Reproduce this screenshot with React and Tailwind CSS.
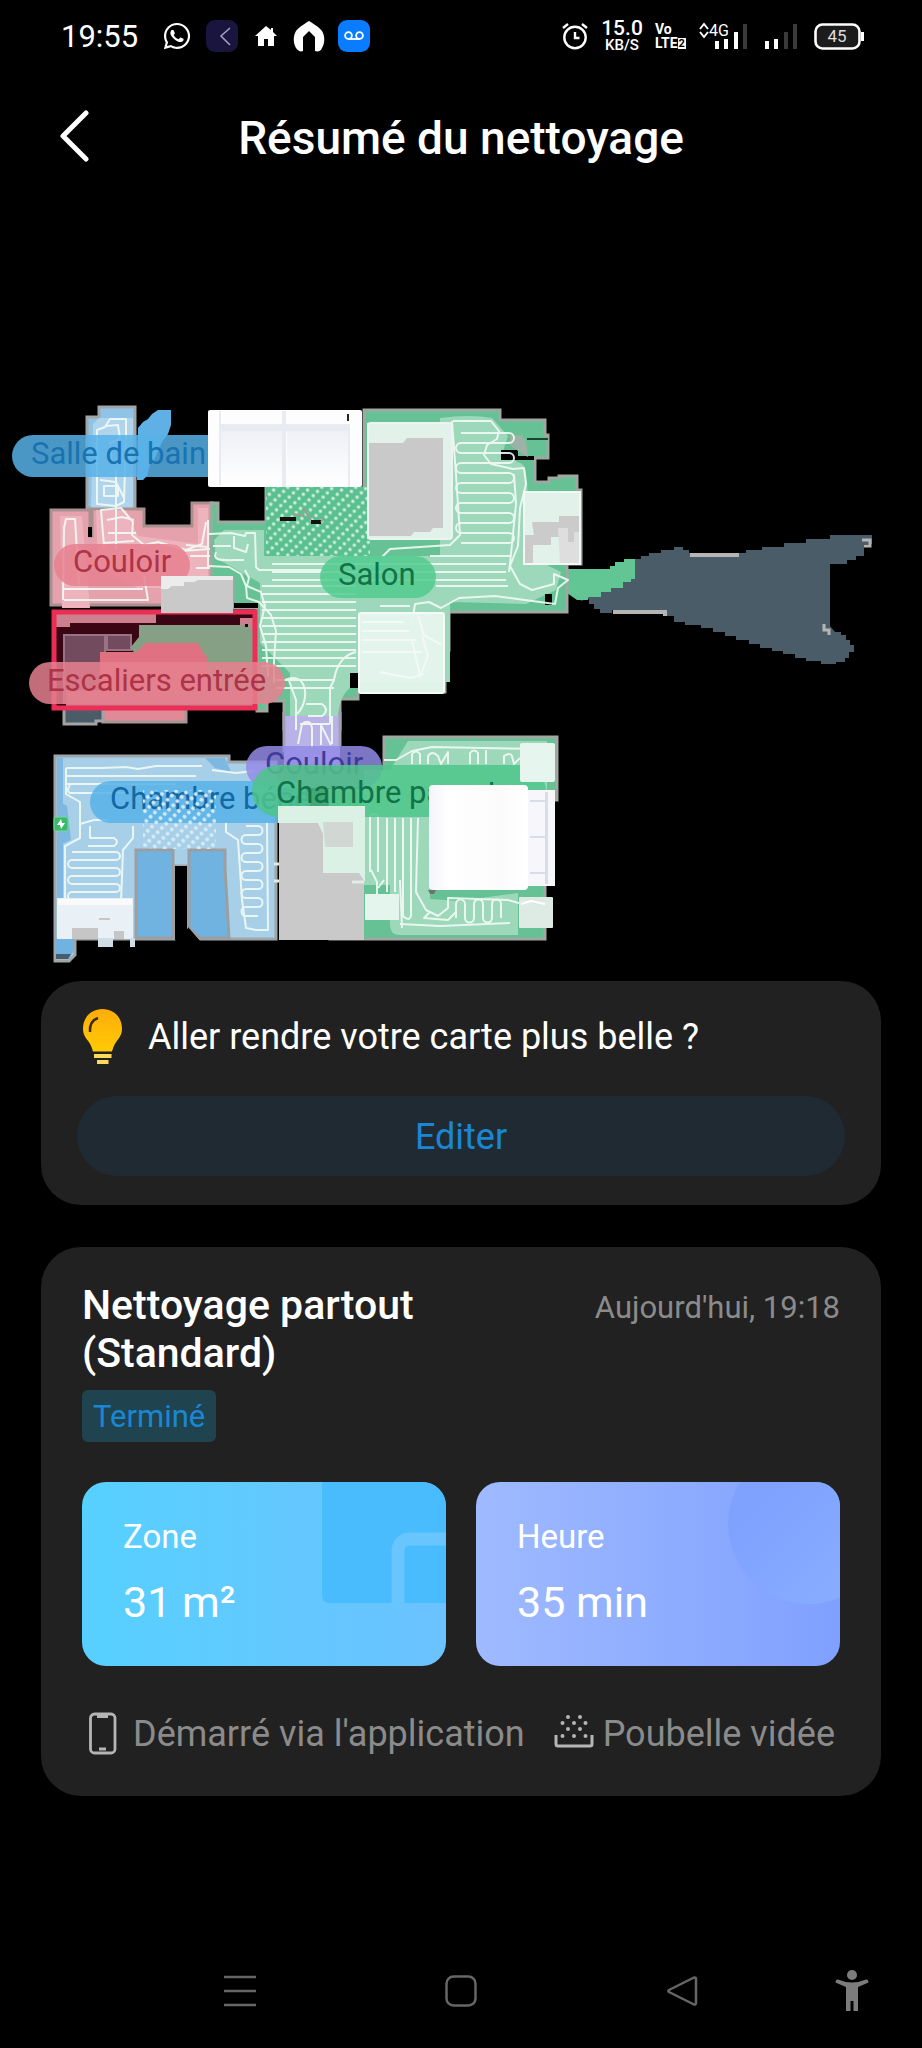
import { FaWhatsapp } from "react-icons/fa";

/* Serpentine vacuum track: horizontal lanes joined by rounded turns. */
function lanes(x0, x1, y0, y1, step) {
  let d = `M${x0} ${y0}`;
  let right = true;
  for (let y = y0; y <= y1; y += step) {
    d += ` H${right ? x1 : x0}`;
    if (y + step <= y1) d += ` a${step / 2} ${step / 2} 0 0 ${right ? 1 : 0} 0 ${step}`;
    right = !right;
  }
  return d;
}

/* The same track with vertical lanes. */
function columns(x0, x1, y0, y1, step) {
  let d = `M${x0} ${y1}`;
  let up = true;
  for (let x = x0; x <= x1; x += step) {
    d += ` V${up ? y0 : y1}`;
    if (x + step <= x1) d += ` a${step / 2} ${step / 2} 0 0 ${up ? 1 : 0} ${step} 0`;
    up = !up;
  }
  return d;
}

function straight(x0, x1, y0, y1, step) {
  let d = "";
  for (let y = y0; y <= y1; y += step) d += `M${x0} ${y}H${x1}`;
  return d;
}

function StatusBar() {
  return (
    <div className="flex h-[72px] items-center justify-between pr-[58px] pl-[61px]">
      <div className="flex items-center">
        <span className="w-[80px] text-[31px] leading-none">19:55</span>
        <FaWhatsapp className="ml-[21px] size-[30px]" />
        <svg className="ml-[14px] size-8" viewBox="0 0 32 32" fill="none">
          <rect width="32" height="32" rx="9" fill="#19153f" />
          <path d="M24 8 15 16l9 9" stroke="#a09fc0" strokeWidth="1.6" />
        </svg>
        <svg className="ml-[16px] h-6 w-6" viewBox="0 0 24 24" fill="#fff">
          <path d="M12 2 1 12h3v10h6v-7h4v7h6V12h3l-4-4V4h-2v2z" />
        </svg>
        <svg className="ml-[15px] size-8" viewBox="0 0 32 32" fill="#fff">
          <path d="M16 1C13 3 6 7 3 11c-3 5-3 12 0 17 2 3 5 4 7 3V17l6-6 6 6v14c3 1 6 0 7-3 3-5 3-12 0-17C26 7 19 3 16 1Z" />
        </svg>
        <svg className="ml-[13px] size-8" viewBox="0 0 32 32" fill="none">
          <rect width="32" height="32" rx="9" fill="#0a7cff" />
          <g stroke="#fff" strokeWidth="1.8">
            <circle cx="10.500" cy="15.500" r="3.400" />
            <circle cx="21.500" cy="15.500" r="3.400" />
            <path d="M10 19h12" />
          </g>
        </svg>
      </div>
      <div className="flex items-center">
        <svg className="size-7" viewBox="0 0 28 28" fill="none" stroke="#fff" strokeWidth="2.4">
          <circle cx="14" cy="15.5" r="10.7" />
          <path d="M14 10v6h4.5M2 6l5-4M26 6l-5-4" />
        </svg>
        <div className="ml-3 flex w-[42px] flex-col items-center font-medium">
          <span className="text-[21px] leading-[17px]">15.0</span>
          <span className="text-[15px] leading-[16px]">KB/S</span>
        </div>
        <div className="ml-[12px] flex w-[34px] flex-col text-[14px] leading-[14px] font-bold">
          <span>Vo</span>
          <span className="flex items-center">
            LTE
            <span className="bg-white px-px text-[11px] leading-[11px] text-black">2</span>
          </span>
        </div>
        <svg className="ml-[10px] h-8 w-[50px]" viewBox="0 0 50 32" fill="#fff">
          <path d="m1 9 4-5 4 5M1 12l4 5 4-5" fill="none" stroke="#fff" strokeWidth="2" />
          <text x="10" y="16" fontSize="16">4G</text>
          <path d="M16 21h4v8h-4zM25 19h4v10h-4zM35 12h4v17h-4z" />
          <path fill="#3a3a3a" d="M44 4h4v25h-4z" />
        </svg>
        <svg className="ml-[15px] h-8 w-[36px]" viewBox="0 0 36 32" fill="#fff">
          <path d="M1 21h4v8H1zM10 19h4v10h-4z" />
          <path fill="#3a3a3a" d="M20 12h4v17h-4zM29 4h4v25h-4z" />
        </svg>
        <svg className="ml-[14px] h-8 w-[50px]" viewBox="0 0 50 32">
          <rect x="1.5" y="4.5" width="44" height="24" rx="7" fill="#1c1c1c" stroke="#fff" strokeWidth="2.6" />
          <path fill="#fff" d="M47 12h3v9h-3z" />
          <text x="23" y="22" fontSize="17" textAnchor="middle" fill="#ddd">45</text>
        </svg>
      </div>
    </div>
  );
}

function RoomLabel({ x, y, width, height = 42, fill, ink, textX, baseline, children }) {
  return (
    <g>
      <rect x={x} y={y} width={width} height={height} rx={height / 2} fill={fill} fillOpacity="0.85" />
      <text x={textX} y={baseline} fontSize="31" fill={ink}>{children}</text>
    </g>
  );
}

function CleaningMap() {
  return (
    <svg className="mt-[196px] block w-full" viewBox="0 400 922 570" role="img" aria-label="Carte du nettoyage">
      <defs>
        <pattern id="rugGreen" width="6" height="8" patternUnits="userSpaceOnUse" patternTransform="rotate(-45)">
          <rect width="6" height="8" fill="#5bc08f" />
          <circle cx="3" cy="4" r="1.700" fill="#d3f0e0" />
        </pattern>
        <pattern id="rugBlue" width="6" height="8" patternUnits="userSpaceOnUse" patternTransform="rotate(-45)">
          <circle cx="3" cy="4" r="1.900" fill="#d8ecf8" />
        </pattern>
        <linearGradient id="seat" x2="0" y2="1">
          <stop stopColor="#eef0f6" />
          <stop offset="1" stopColor="#ffffff" />
        </linearGradient>
        <linearGradient id="sheet">
          <stop stopColor="#f4f4fd" />
          <stop offset="0.2" stopColor="#ffffff" />
          <stop offset="0.7" stopColor="#fbfbfb" />
          <stop offset="1" stopColor="#ffffff" />
        </linearGradient>
      </defs>

      {/* outdoor area seen by the lidar */}
      <path
        fill="#4b5c69"
        d="M580 601l54-42h7v-3h8v-3h12v-3h13v-3h9v3h6v3h57v-3h16v-3h22v-4h22v-4h24v-4h42v9h-8v12h-8v4h-9v4h-17v62l5 6h6v3h5v5h4v5h4v7h-5v6h-4v4h-9v2h-15v-3h-15v-3h-11v-4h-12v-3h-11v-3h-12v-4h-11v-4h-13v-4h-11v-4h-12v-4h-12v-3h-16v-3h-11v-6h-7v-6h-55v3h-12v-4h-6v-5h-5v-5z"
      />
      <path d="M690 555h49M613 612h52v4" fill="none" stroke="#b5b5b5" strokeWidth="4" />
      <path d="M862 540h8v6h-6M824 624v6h5v5" fill="none" stroke="#b5b5b5" strokeWidth="3" />
      <path fill="#62c594" d="M567 569h43v-3h5v-4h9v-3h11v20h-4v3h-8v6h-12v4h-10v5h-13v3h-11l-10-7z" />

      {/* bathroom */}
      <path fill="#8fc4e6" stroke="#a2a6a8" strokeWidth="3" d="M87 417h12v-10h36v101H87z" />
      <path fill="#afd4eb" d="M93 424l6-6h34v90H91z" />
      <path fill="#5fb0e4" d="M138 428l5-6 5-3 4-5 6-4h13v15l-3 9-6 8-7 16-5 6-3 12-4 4h-6z" />

      {/* hallway */}
      <path fill="#e5a2ad" stroke="#a8908f" strokeWidth="3" d="M51 510h39v26h2v-27h52v17h48v-23h20v102H51z" />
      <path fill="#edb4bd" d="M60 516h22l8 92H62zM96 510h30l12 26 60 8v-36h10v80h-70l-40-20z" />
      <path fill="#000" d="M88 527h4v10h-4z" />

      {/* living room */}
      <path
        fill="#66c294"
        stroke="#a0a8a2"
        strokeWidth="3"
        d="M211 503h7v19h48v-34h98v-78h136v10h45v15h3v23h-13v24h14v-4h10v-2h18v14h4v74h-14v48H449v38h-4v42h-87v7h-18v30h-56v-28h-17v10h-10V608h-24v-30h-22z"
      />
      <path
        fill="#9dd8bb"
        d="M214 540l10-10h40v26h176V418q30-4 52 0l16 18-6 18 20 10q8 4 5 80l18 20 16 8-5 18-30 14-76-2v80h-90q-22 8-22 38v28h-48v-75l-30-30v-60l-44-25z"
      />
      <path fill="#000" d="M501 450h17v6h16v4h-33zM545 594h7v11h-7zM350 673h8v15h-8zM234 603h24v5h-24z" />
      <path fill="#9db2a6" d="M510 435h12l4 6 2 16-10-6-8-6z" />
      <path d="M527 439h21" stroke="#174531" strokeWidth="2" />
      <path fill="#b9b2e6" d="M284 716h56v50h-56z" />
      <path fill="none" stroke="#a3a0b5" strokeWidth="3" d="M284 712v40M340 712v34" />
      <path fill="url(#rugGreen)" d="M266 487h104v69H266z" />
      <path d="M280 519h16M311 522h10" stroke="#111" strokeWidth="4" />
      <path d="M294 514l10 2M303 508l8 12M321 522l3-4" stroke="#9d9d93" strokeWidth="2" />

      {/* parents' room */}
      <path fill="#66c294" stroke="#a0a8a2" strokeWidth="3" d="M384 737h173v63h-12v139H330V790h54z" />
      <path fill="#9dd8bb" d="M408 741h139v70H430v88l30 2 58-8v42H400q-10 0-10-10v-40h-26V770h26z" />

      {/* child's room */}
      <path fill="#a7cfe8" stroke="#a0a5a8" strokeWidth="3" d="M55 756h174v6h47v177h-76l-12-12v-61h-14v73H75v16l-6 6H55z" />
      <path fill="#7cb8e0" d="M57 800l10 6 4 34-14 6zM57 758h6v180h-6zM205 758h20l6 14-16-4z" />
      <path fill="#70b3e0" stroke="#9b9fa2" strokeWidth="3" d="M136 850h37v88h-37zM189 850h36v18l4 70h-29l-11-10z" />
      <path fill="#000" d="M175 866h12v74h-12zM188 927l12 14h-12z" />
      <path fill="#70b3e0" d="M56 938h18v12l-5 9H56z" />
      <path fill="#4b5c69" d="M56 954h15l-3 5H56z" />

      {/* no-go stairs */}
      <path fill="#e08997" stroke="#a39798" strokeWidth="3" d="M103 700h83v22h-83z" />
      <path fill="#4b5c69" stroke="#a3a3a3" strokeWidth="3" d="M64 700h39v21h-7v3H64z" />
      <path fill="#2c0410" d="M52 612h205v98H52z" />
      <path fill="#c98792" d="M56 613h100v10H70v4H56zM240 618h14v20h-14z" />
      <path fill="#694f60" stroke="#8f7b88" strokeWidth="2" d="M64 635h41v68H64zM107 635h24v15h-24z" />
      <path fill="#7dab8a" d="M139 625h110l5 8v73H206l-10-40-60-12-6-6 9-11z" />
      <path fill="#de7888" d="M100 706v-54h36l10-9h52l4 8 6 8v47z" />
      <path fill="#cc8893" d="M66 690h188v18H66z" />
      <path fill="#000" d="M245 624h3v3h-3z" />
      <rect x="54" y="612" width="201" height="96" fill="#ee2b52" fillOpacity="0.08" stroke="#ec2d55" strokeWidth="5" />

      {/* vacuum track */}
      <g fill="none" stroke="#f2fbf6" strokeWidth="2" strokeLinejoin="round" opacity="0.9">
        <path d="M97 504V430l8-3 5-8h16v15l-2 68-8 4zM106 426l12-1 2 14-10 4 2 20h8M104 486h14v10h-14zM116 470v80M100 480l16 2 8 16" />
        <path d="M63 600l1-72 2-9h9l4 66M63 589h80M64 600h84l-4-24M104 546l-3-36 20-2 12 14-1 13 12 10 14-3 28 8 16-6 4-22M107 520l15-3 12 3M108 533h28M104 543l30-2M186 545l22 2M190 556h20M196 568h14M208 520v48M182 551l28-2" />
        <path d="M209 534l22-1 14 3 1-3h9l1 34 3 3h64M209 566l20 1 12 7 5 12 1 12 12 4 12 13 5 16-2 30v22M245 570l4 8-2 8 14 6 4 14-5 20 6 20 2 30M213 546h18M216 552c-4 10 6 8 28 8M234 536v12l12 4 2-8" />
        <path d={straight(262, 356, 586, 672, 8)} />
        <path d={straight(276, 334, 680, 694, 8)} />
        <path d={straight(272, 506, 564, 580, 8)} />
        <path d="M430 556h80M436 586h72M380 606h30" />
        <path d={lanes(461, 509, 433, 552, 10)} />
        <path d="M453 421h38l8 10-2 8-10 6-3 10 7 9 22 5 11-1 2 16-6 24-2 38-8 20 10 18 12 6 22-6v-10l14 6-10 8-3 16-60-8-36 2-18 10-12-6-14 2-3 20M514 474l2 30-5 50-2 18M452 421l4 54 4 60-10 10-60 4-8 8" />
        <path d="M356 652q-18 4-22 28l-4 8v36M296 730v-30l-8-22M285 680c22-10 26 20 12 34M306 704h16q8 6 0 12h-14M300 724h30M298 744l4-20q8-6 10 4v20M321 745v-20l10 20M332 716v28" />
        <path d="M66 768h36l24-1 12 2 18-3h46M66 776h130M66 784h110M66 768v26l14 8v36l-15 8v62M70 785q-4 6 0 8h60M80 824l14-4h14M212 770l24 3 18-2M133 826v12l-10 12-2 52" />
        <path d={lanes(72, 116, 852, 900, 8)} />
        <path d="M90 826v12h24q6 4 0 8H88" />
        <path d="M226 822v10l12 8 4 60 4 28 10 2h12l-1-108" />
        <path d={lanes(246, 258, 826, 922, 9)} />
        <path d="M384 760h12l16-9 20-4 110 2M412 764v-10q4-5 8 0v10M428 764v-8q4-6 10 0l3 8 7-12v12M470 764v-11q4-5 8 0v11M486 750v14M504 764v-8q6-4 8 0l2 8 6-6" />
        <path d={columns(370, 378, 818, 872, 8)} />
        <path d="M387 818v74M395 818v74M403 818v98q6 6 8 0v-98M371 870l6 12v12M378 888l6-8M418 818l-2 74 10 18 12 6 10-8v-10l60 2 14 4M400 924l40 2 70-3M430 912l-6 6 24 2 8-8M400 880l2 48" />
        <path d={columns(456, 508, 904, 918, 9)} />
      </g>

      <RoomLabel x={12} y={435} width={240} fill="#57b1e8" ink="#1873b3" textX={31} baseline={464}>Salle de bain</RoomLabel>
      <RoomLabel x={54} y={544} width={136} fill="#e6808f" ink="#ad3347" textX={73} baseline={572}>Couloir</RoomLabel>
      <RoomLabel x={320} y={556} width={116} fill="#52cb8f" ink="#0f7348" textX={338} baseline={585}>Salon</RoomLabel>
      <RoomLabel x={29} y={662} width={256} fill="#e6808f" ink="#ad3347" textX={47} baseline={691}>Escaliers entrée</RoomLabel>
      <RoomLabel x={246} y={746} width={136} fill="#938be6" ink="#403a9c" textX={265} baseline={774}>Couloir</RoomLabel>
      <RoomLabel x={90} y={781} width={220} fill="#57b1e8" ink="#1168a5" textX={110} baseline={809}>Chambre bébé</RoomLabel>
      <path fill="url(#rugBlue)" d="M143 790h73v59h-73z" />
      <RoomLabel x={252} y={765} width={294} height={52} fill="#4fc68a" ink="#0f7348" textX={276} baseline={803}>Chambre parents</RoomLabel>

      {/* furniture */}
      <rect x="208" y="410" width="154" height="77" rx="2" fill="#fdfdfe" />
      <path fill="url(#seat)" d="M221 430h61v55h-61zM287 430h61v55h-61z" />
      <path fill="#e8ecf2" d="M221 424h128v7H221zM282 411h4v76h-4zM219 411h2v74h-2zM348 424h2v63h-2z" />
      <path d="M348 414v7" stroke="#222" strokeWidth="2" />
      <path fill="#c9c9c9" d="M367 423h85v116h-85z" />
      <path fill="#e2f2ea" d="M367 423h85v116h-85v-3h44l3-4h16l3-4h10v-90h-36l-4 5h-36z" />
      <rect x="368" y="423" width="84" height="116" rx="3" fill="none" stroke="#e9f5ef" strokeWidth="2" />
      <path fill="#e2f1ea" d="M523 491h58v74h-58z" />
      <path fill="#cbcbcb" d="M532 522h27v-6h20v48h-18v-27h-10v8h-18v18h-8v-28h9z" />
      <path fill="#dedede" d="M558 528h10v14h6v-10h6v32h-20z" />
      <path fill="none" stroke="#f3f8f5" strokeWidth="2" d="M524 492h56v72h-56z" />
      <rect x="359" y="613" width="85" height="80" rx="2" fill="#e6f5ed" fillOpacity="0.95" stroke="#f5fbf8" strokeWidth="2" />
      <path d="M362 622h42M362 631h48M362 640h54M362 652h60M418 615l6 20 18 10M412 640l8 36 8-20-6-20M380 672l30 6 14-4" fill="none" stroke="#f3faf6" strokeWidth="2" />
      <path fill="#c9c9c9" d="M161 576h72v37h-72z" />
      <path fill="#ececec" d="M161 576h72v4h-35l-4 2h-10v4h-12l-4 3h-7z" />
      <path fill="#c9c9c9" d="M279 808h85v132h-85z" />
      <path fill="#dcf1e6" d="M278 806h87v76l-6-9h-36v-39l-5-11h-40z" />
      <path fill="#d1d8d4" d="M323 822h30v25h-28z" />
      <path d="M274 864h5M274 881h5M352 882h12" stroke="#e5e9e7" strokeWidth="3" />
      <rect x="365" y="894" width="34" height="26" fill="#e3f5ec" />
      <rect x="520" y="743" width="35" height="39" rx="2" fill="#e6f5ed" />
      <rect x="519" y="897" width="34" height="31" rx="1" fill="#deebe4" />
      <path d="M521 904l10-3 14 3" fill="none" stroke="#fff" strokeWidth="2" />
      <path fill="#f6f6fb" d="M528 790h27v96h-27z" />
      <path fill="#d8dcec" d="M545 792h3v92h-3zM530 836h18v2h-18zM530 800h16v2h-16zM530 872h16v2h-16z" />
      <rect x="429" y="785" width="99" height="105" rx="4" fill="url(#sheet)" />
      <path fill="#6f7470" d="M428 890h8l-2 4h-4z" />
      <rect x="57" y="898" width="76" height="41" fill="#e9f1f7" />
      <path fill="#f8fafc" d="M58 899h74v6H58z" />
      <path fill="#c6c6c6" d="M72 928h26v11H72zM99 918h11v2H99zM114 931h10v8h-10z" />
      <path fill="#cfdde6" d="M98 938h15v9H98zM130 938h5v9h-5z" />
      <rect x="54" y="817" width="14" height="14" rx="2" fill="#3cb96d" stroke="#7ad79c" />
      <path fill="#fff" d="M61 819l-4 6h3l1 4 4-6h-3z" />
    </svg>
  );
}

function TipCard() {
  return (
    <section className="mt-[11px] rounded-[40px] bg-[#212121] px-[36px] pt-[24px] pb-[29px]">
      <div className="flex h-[64px] items-center pl-[5px]">
        <svg className="h-[58px] w-[42px]" viewBox="0 0 42 58">
          <defs>
            <linearGradient id="bulb" x2="0" y2="1">
              <stop stopColor="#ffac0a" />
              <stop offset="1" stopColor="#ffca05" />
            </linearGradient>
          </defs>
          <path fill="url(#bulb)" d="M20.500 1C9 1 1 9.500 1 20.500c0 6 2.500 9 5.500 13 2.500 3.500 3.500 6.500 4.500 10h19c1-3.500 2-6.500 4.500-10 3-4 5.500-7 5.500-13C40 9.500 32 1 20.500 1Z" />
          <path fill="#ffd85c" d="M12 46h17.500v4H12zM15 52h11.500v4H15z" />
          <path d="M8 24c-.5-7 2-12 8-14" fill="none" stroke="#3a2b08" strokeWidth="2.500" />
        </svg>
        <p className="ml-[24px] text-[36px] leading-[44px]">Aller rendre votre carte plus belle ?</p>
      </div>
      <button type="button" className="mt-[27px] block h-[80px] w-full rounded-full bg-[#1f2a33] pt-[2px] text-[36px] text-[#1a87d4]">
        Editer
      </button>
    </section>
  );
}

function SummaryCard() {
  return (
    <section className="mt-[42px] rounded-[40px] bg-[#212121] px-[41px] pt-[34px] pb-[36px]">
      <div className="flex items-start justify-between">
        <h2 className="w-[400px] text-[41px] leading-[48px] font-medium">Nettoyage partout (Standard)</h2>
        <time className="pt-[7px] text-[31px] leading-[40px] text-[#8b8b8b]">Aujourd'hui, 19:18</time>
      </div>
      <div className="mt-[13px] flex">
        <span className="rounded-[6px] bg-[#20444f] px-[11px] pt-[2px] text-[31px] leading-[50px] text-[#1a87d4]">Terminé</span>
      </div>
      <div className="mt-[40px] grid grid-cols-2 gap-[30px]">
        <div className="relative h-[184px] overflow-hidden rounded-[24px] bg-linear-to-r from-[#56d0ff] to-[#6bc2fe] pt-[34px] pl-[41px]">
          <svg className="absolute top-0 right-0 h-full" viewBox="0 0 124 184" fill="none">
            <path fill="#49bcfe" d="M0 0h124v121H8q-8 0-8-8z" />
            <path stroke="#68c5fe" strokeWidth="13" d="M76 128V70q0-13 13-13h40" />
          </svg>
          <p className="relative text-[33px] leading-[42px]">Zone</p>
          <p className="relative mt-[17px] text-[43px] leading-[54px]">31 m²</p>
        </div>
        <div className="relative h-[184px] overflow-hidden rounded-[24px] bg-linear-to-r from-[#9fbaff] to-[#80a0ff] pt-[34px] pl-[41px]">
          <svg className="absolute top-0 right-0 h-full" viewBox="0 0 124 184">
            <defs>
              <linearGradient id="dial" x2="1" y2="1">
                <stop offset="0.300" stopColor="#7fa2ff" />
                <stop offset="1" stopColor="#8ab0ff" />
              </linearGradient>
            </defs>
            <circle cx="92" cy="42" r="80" fill="url(#dial)" />
          </svg>
          <p className="relative text-[33px] leading-[42px]">Heure</p>
          <p className="relative mt-[17px] text-[43px] leading-[54px]">35 min</p>
        </div>
      </div>
      <div className="mt-[42px] flex items-center justify-between pr-[5px] pl-[7px] text-[36px] leading-[52px] text-[#8b8b8b]">
        <div className="flex items-center">
          <svg className="h-[44px] w-[28px]" viewBox="0 0 28 44" fill="none" stroke="#b5b5b5" strokeWidth="2.800">
            <rect x="1.500" y="2" width="24.500" height="39" rx="4" />
            <path d="M8 4.500h11M10 37h7" strokeWidth="3" />
          </svg>
          <span className="ml-[16px]">Démarré via l'application</span>
        </div>
        <div className="flex items-center">
          <svg className="h-[44px] w-[40px]" viewBox="0 0 40 44" fill="#b5b5b5">
            <path d="M2 23v9q0 2 2 2h32q2 0 2-2v-9" fill="none" stroke="#b5b5b5" strokeWidth="3" />
            <circle cx="14" cy="5" r="2" />
            <circle cx="26" cy="5" r="2" />
            <circle cx="8.500" cy="11" r="2" />
            <circle cx="20" cy="11" r="2" />
            <circle cx="31.500" cy="11" r="2" />
            <circle cx="14" cy="17" r="2" />
            <circle cx="26" cy="17" r="2" />
            <circle cx="8.500" cy="24" r="2" />
            <circle cx="20" cy="24" r="2" />
            <circle cx="31.500" cy="24" r="2" />
          </svg>
          <span className="ml-[9px]">Poubelle vidée</span>
        </div>
      </div>
    </section>
  );
}

function SystemNav() {
  return (
    <nav className="mt-auto grid grid-cols-[130px_1fr_1fr_1fr_130px] items-center justify-items-center pb-[34px]">
      <button type="button" aria-label="Applications récentes" className="col-start-2">
        <svg className="h-[46px] w-[32px]" viewBox="0 0 32 46" stroke="#666" strokeWidth="2.500">
          <path d="M0 9h32M0 23h32M0 37h32" />
        </svg>
      </button>
      <button type="button" aria-label="Accueil">
        <svg className="h-[46px] w-[32px]" viewBox="0 0 32 46" fill="none" stroke="#666" strokeWidth="2.500">
          <rect x="1.500" y="8.500" width="29" height="29" rx="7" />
        </svg>
      </button>
      <button type="button" aria-label="Retour">
        <svg className="h-[46px] w-[32px]" viewBox="0 0 32 46" fill="none" stroke="#666" strokeWidth="2.500" strokeLinejoin="round">
          <path d="M28 9.500 3 22q-1.500 1 0 2l25 12.500q2 .5 2-2v-23q0-2.500-2-2Z" />
        </svg>
      </button>
      <button type="button" aria-label="Accessibilité" className="mr-[10px]">
        <svg className="h-[46px] w-[34px]" viewBox="0 0 34 46" fill="#7c7c7c">
          <circle cx="17" cy="7" r="5" />
          <path d="M3 11.500q14 6 28 0 2.500 0 2.500 3L23 19v24h-4.500V33h-3v10H11V19L.5 14.500q0-3 2.500-3Z" />
        </svg>
      </button>
    </nav>
  );
}

export default function App() {
  return (
    <div className="flex min-h-screen flex-col bg-black font-['Roboto',sans-serif] text-white">
      <StatusBar />
      <header className="grid h-[132px] grid-cols-[60px_1fr_60px] items-center px-[50px]">
        <button type="button" aria-label="Retour" className="flex items-center">
          <svg className="h-[56px] w-[48px]" viewBox="0 0 48 56" fill="none" stroke="#fff" strokeWidth="5" strokeLinecap="round" strokeLinejoin="round">
            <path d="M36 3 13 26l23 23" />
          </svg>
        </button>
        <h1 className="text-center text-[46px] leading-[56px] font-medium">Résumé du nettoyage</h1>
      </header>
      <CleaningMap />
      <main className="px-[41px]">
        <TipCard />
        <SummaryCard />
      </main>
      <SystemNav />
    </div>
  );
}
